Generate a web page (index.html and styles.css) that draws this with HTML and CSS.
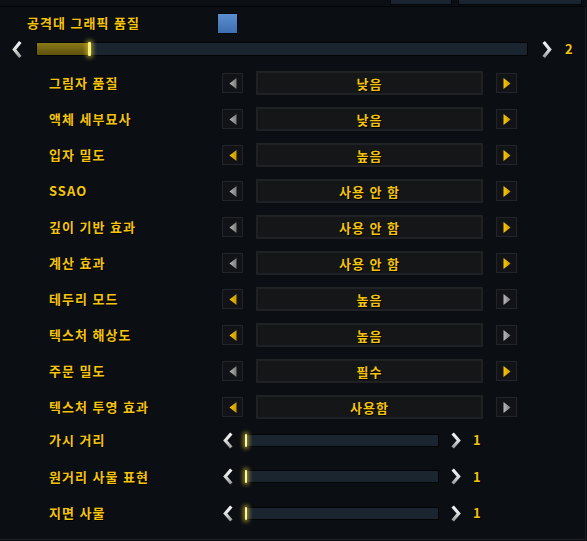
FILE: index.html
```html
<!DOCTYPE html>
<html lang="ko">
<head>
<meta charset="utf-8">
<link rel="stylesheet" href="styles.css">
</head>
<body>
<svg width="0" height="0" class="defs">
  <defs>
    <linearGradient id="chev" x1="0" y1="0" x2="0" y2="1">
      <stop offset="0" stop-color="#f4f4f4"/>
      <stop offset="0.5" stop-color="#e0e0e0"/>
      <stop offset="1" stop-color="#9a9a9a"/>
    </linearGradient>
    <linearGradient id="triY" x1="0" y1="0" x2="1" y2="0">
      <stop offset="0" stop-color="#f7c600"/>
      <stop offset="1" stop-color="#c99a00"/>
    </linearGradient>
    <linearGradient id="triG" x1="0" y1="0" x2="1" y2="0">
      <stop offset="0" stop-color="#b8b8b8"/>
      <stop offset="1" stop-color="#7c7c7c"/>
    </linearGradient>
  </defs>
</svg>
<div class="topbar">
  <div class="tab tab-a"></div>
  <div class="tab tab-b"></div>
</div>
<div class="panel">
  <div class="title-row">
    <span class="title">공격대 그래픽 품질</span>
    <span class="check"></span>
  </div>
  <div class="main-slider">
    <svg class="chev" width="10" height="19" viewBox="0 0 10 19"><polyline points="8.3,2 2.3,9.5 8.3,17" fill="none" stroke="url(#chev)" stroke-width="3.2" stroke-linejoin="miter"/></svg>
    <div class="track track-main"><div class="fill" style="width:52px"></div><div class="thumb"></div></div>
    <svg class="chev" width="10" height="19" viewBox="0 0 10 19"><polyline points="1.7,2 7.7,9.5 1.7,17" fill="none" stroke="url(#chev)" stroke-width="3.2"/></svg>
    <span class="num">2</span>
  </div>

  <div class="rows">
    <div class="row"><span class="label">그림자 품질</span>
      <span class="btn"><svg width="8" height="11" viewBox="0 0 8 11"><polygon points="7.5,0 0.5,5.5 7.5,11" fill="url(#triG)"/></svg></span>
      <span class="box">낮음</span>
      <span class="btn"><svg width="8" height="11" viewBox="0 0 8 11"><polygon points="0.5,0 7.5,5.5 0.5,11" fill="url(#triY)"/></svg></span></div>
    <div class="row"><span class="label">액체 세부묘사</span>
      <span class="btn"><svg width="8" height="11" viewBox="0 0 8 11"><polygon points="7.5,0 0.5,5.5 7.5,11" fill="url(#triG)"/></svg></span>
      <span class="box">낮음</span>
      <span class="btn"><svg width="8" height="11" viewBox="0 0 8 11"><polygon points="0.5,0 7.5,5.5 0.5,11" fill="url(#triY)"/></svg></span></div>
    <div class="row"><span class="label">입자 밀도</span>
      <span class="btn"><svg width="8" height="11" viewBox="0 0 8 11"><polygon points="7.5,0 0.5,5.5 7.5,11" fill="url(#triY)"/></svg></span>
      <span class="box">높음</span>
      <span class="btn"><svg width="8" height="11" viewBox="0 0 8 11"><polygon points="0.5,0 7.5,5.5 0.5,11" fill="url(#triY)"/></svg></span></div>
    <div class="row"><span class="label">SSAO</span>
      <span class="btn"><svg width="8" height="11" viewBox="0 0 8 11"><polygon points="7.5,0 0.5,5.5 7.5,11" fill="url(#triG)"/></svg></span>
      <span class="box">사용 안 함</span>
      <span class="btn"><svg width="8" height="11" viewBox="0 0 8 11"><polygon points="0.5,0 7.5,5.5 0.5,11" fill="url(#triY)"/></svg></span></div>
    <div class="row"><span class="label">깊이 기반 효과</span>
      <span class="btn"><svg width="8" height="11" viewBox="0 0 8 11"><polygon points="7.5,0 0.5,5.5 7.5,11" fill="url(#triG)"/></svg></span>
      <span class="box">사용 안 함</span>
      <span class="btn"><svg width="8" height="11" viewBox="0 0 8 11"><polygon points="0.5,0 7.5,5.5 0.5,11" fill="url(#triY)"/></svg></span></div>
    <div class="row"><span class="label">계산 효과</span>
      <span class="btn"><svg width="8" height="11" viewBox="0 0 8 11"><polygon points="7.5,0 0.5,5.5 7.5,11" fill="url(#triG)"/></svg></span>
      <span class="box">사용 안 함</span>
      <span class="btn"><svg width="8" height="11" viewBox="0 0 8 11"><polygon points="0.5,0 7.5,5.5 0.5,11" fill="url(#triY)"/></svg></span></div>
    <div class="row"><span class="label">테두리 모드</span>
      <span class="btn"><svg width="8" height="11" viewBox="0 0 8 11"><polygon points="7.5,0 0.5,5.5 7.5,11" fill="url(#triY)"/></svg></span>
      <span class="box">높음</span>
      <span class="btn"><svg width="8" height="11" viewBox="0 0 8 11"><polygon points="0.5,0 7.5,5.5 0.5,11" fill="url(#triG)"/></svg></span></div>
    <div class="row"><span class="label">텍스처 해상도</span>
      <span class="btn"><svg width="8" height="11" viewBox="0 0 8 11"><polygon points="7.5,0 0.5,5.5 7.5,11" fill="url(#triY)"/></svg></span>
      <span class="box">높음</span>
      <span class="btn"><svg width="8" height="11" viewBox="0 0 8 11"><polygon points="0.5,0 7.5,5.5 0.5,11" fill="url(#triG)"/></svg></span></div>
    <div class="row"><span class="label">주문 밀도</span>
      <span class="btn"><svg width="8" height="11" viewBox="0 0 8 11"><polygon points="7.5,0 0.5,5.5 7.5,11" fill="url(#triG)"/></svg></span>
      <span class="box">필수</span>
      <span class="btn"><svg width="8" height="11" viewBox="0 0 8 11"><polygon points="0.5,0 7.5,5.5 0.5,11" fill="url(#triY)"/></svg></span></div>
    <div class="row"><span class="label">텍스처 투영 효과</span>
      <span class="btn"><svg width="8" height="11" viewBox="0 0 8 11"><polygon points="7.5,0 0.5,5.5 7.5,11" fill="url(#triY)"/></svg></span>
      <span class="box">사용함</span>
      <span class="btn"><svg width="8" height="11" viewBox="0 0 8 11"><polygon points="0.5,0 7.5,5.5 0.5,11" fill="url(#triG)"/></svg></span></div>
  </div>

  <div class="sliders">
    <div class="srow"><span class="label">가시 거리</span>
      <svg class="chev" width="10" height="17" viewBox="0 0 10 17"><polyline points="8.3,1.5 2.3,8.5 8.3,15.5" fill="none" stroke="url(#chev)" stroke-width="3.2"/></svg>
      <div class="track track-small"><div class="thumb thumb-small"></div></div>
      <svg class="chev" width="10" height="17" viewBox="0 0 10 17"><polyline points="1.7,1.5 7.7,8.5 1.7,15.5" fill="none" stroke="url(#chev)" stroke-width="3.2"/></svg>
      <span class="num">1</span></div>
    <div class="srow"><span class="label">원거리 사물 표현</span>
      <svg class="chev" width="10" height="17" viewBox="0 0 10 17"><polyline points="8.3,1.5 2.3,8.5 8.3,15.5" fill="none" stroke="url(#chev)" stroke-width="3.2"/></svg>
      <div class="track track-small"><div class="thumb thumb-small"></div></div>
      <svg class="chev" width="10" height="17" viewBox="0 0 10 17"><polyline points="1.7,1.5 7.7,8.5 1.7,15.5" fill="none" stroke="url(#chev)" stroke-width="3.2"/></svg>
      <span class="num">1</span></div>
    <div class="srow"><span class="label">지면 사물</span>
      <svg class="chev" width="10" height="17" viewBox="0 0 10 17"><polyline points="8.3,1.5 2.3,8.5 8.3,15.5" fill="none" stroke="url(#chev)" stroke-width="3.2"/></svg>
      <div class="track track-small"><div class="thumb thumb-small"></div></div>
      <svg class="chev" width="10" height="17" viewBox="0 0 10 17"><polyline points="1.7,1.5 7.7,8.5 1.7,15.5" fill="none" stroke="url(#chev)" stroke-width="3.2"/></svg>
      <span class="num">1</span></div>
  </div>
</div>
</body>
</html>
```

FILE: styles.css
```css
* { box-sizing: border-box; }
html, body { margin: 0; padding: 0; }
body {
  width: 587px;
  height: 541px;
  overflow: hidden;
  background: #0a0c10;
  font-family: "Noto Sans CJK KR", "Noto Sans", sans-serif;
  font-weight: 700;
  color: #f4c40c;
}
.defs { position: absolute; width: 0; height: 0; }

.topbar {
  height: 6px;
  display: flex;
  align-items: flex-start;
  gap: 6px;
  padding-left: 390px;
  background: #0b0e13;
}
.tab {
  height: 5px;
  background: #1a2330;
  border: 1px solid #05070a;
  border-top: none;
}
.tab-a { width: 62px; }
.tab-b { width: 124px; }

.panel {
  width: 586px;
  height: 534px;
  background: #0b0e13;
  border-top: 1px solid #040507;
  border-right: 1px solid #1c1f24;
  border-bottom: 1px solid #1c1f24;
  display: flex;
  flex-direction: column;
}

.title-row {
  display: flex;
  align-items: center;
  height: 20px;
  margin-top: 6px;
  padding-left: 27px;
}
.title {
  width: 190px;
  font-size: 13px;
  line-height: 20px;
  letter-spacing: 1px;
  text-shadow: 1px 1px 0 #000;
}
.check {
  width: 21px;
  height: 21px;
  border: 1px solid #05070a;
  background: linear-gradient(#5b8fd0, #3d6eb0);
}

.main-slider {
  display: flex;
  align-items: center;
  height: 20px;
  margin-top: 6px;
  padding-left: 12px;
}
.chev { display: block; flex: none; }
.track {
  position: relative;
  background: #1b2530;
  border: 1px solid #030406;
}
.track-main {
  width: 492px;
  height: 14px;
  margin: 0 14px;
}
.fill {
  height: 100%;
  background: linear-gradient(#8a7a18, #6e6010 60%, #5e5210);
}
.thumb {
  position: absolute;
  left: 51px;
  top: -1px;
  width: 3px;
  height: 14px;
  background: #fff27a;
  box-shadow: 0 0 4px 2px rgba(240, 215, 60, 0.55);
  border-radius: 1px;
}
.num {
  font-size: 13px;
  line-height: 16px;
  text-shadow: 1px 1px 0 #000;
}
.main-slider .num { margin-left: 13px; }

.rows {
  display: flex;
  flex-direction: column;
  margin-top: 6px;
}
.row {
  display: flex;
  align-items: center;
  height: 36px;
  padding-left: 49px;
}
.label {
  width: 173px;
  font-size: 13px;
  line-height: 16px;
  letter-spacing: 1px;
  text-shadow: 1px 1px 0 #000;
  white-space: nowrap;
}
.btn {
  width: 21px;
  height: 20px;
  background: #121316;
  border: 1px solid #222427;
  display: flex;
  align-items: center;
  justify-content: center;
}
.btn svg { display: block; }
.box {
  width: 227px;
  height: 24px;
  margin: 0 13px;
  background: #151618;
  border: 2px solid #1f2123;
  display: flex;
  align-items: center;
  justify-content: center;
  font-size: 13px;
  letter-spacing: 1px;
  text-shadow: 1px 1px 0 #000;
}

.sliders {
  display: flex;
  flex-direction: column;
  margin-top: -3px;
}
.srow {
  display: flex;
  align-items: center;
  height: 36.5px;
  padding-left: 49px;
}
.srow .label { width: 174px; }
.track-small {
  width: 195px;
  height: 13px;
  margin: 0 12px 0 11px;
}
.thumb-small {
  left: 0;
  top: -1px;
  height: 13px;
  width: 2px;
  background: #fff6a0;
}
.srow .num { margin-left: 12px; }
```
